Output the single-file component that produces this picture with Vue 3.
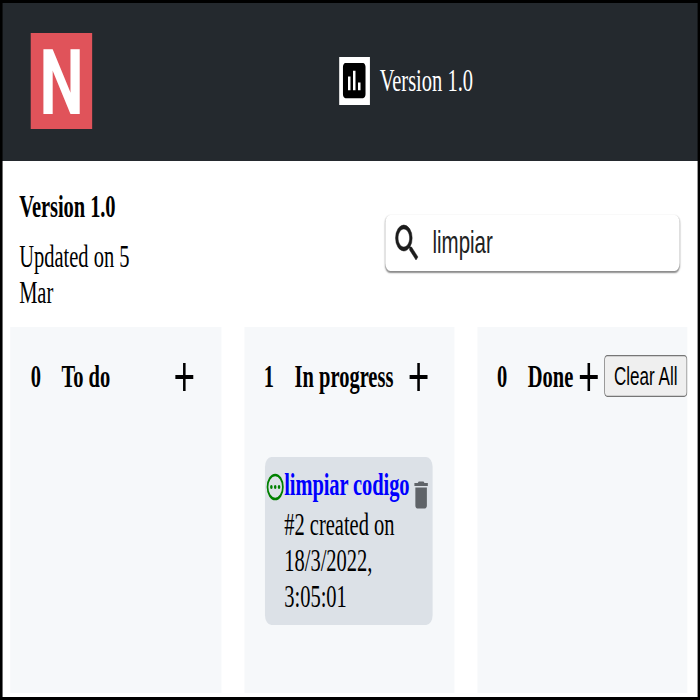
<script setup>
const columns = [
  {
    title: 'To do',
    cards: []
  },
  {
    title: 'In progress',
    cards: [{ id: 2, title: 'limpiar codigo', created: '18/3/2022, 3:05:01' }]
  },
  {
    title: 'Done',
    cards: [],
    clearable: true
  }
]
</script>

<template>
  <div class="viewport">
    <div class="page">
      <header class="header">
        <div class="logo"><span class="logo-letter">N</span></div>
        <div class="project">
          <svg class="project-icon" viewBox="0 0 24 24">
            <path d="M19 3H5c-1.100 0-2 .9-2 2v14c0 1.100.9 2 2 2h14c1.100 0 2-.9 2-2V5c0-1.100-.9-2-2-2zM9 17H7v-7h2v7zm4 0h-2V7h2v10zm4 0h-2v-4h2v4z" />
          </svg>
          <span>Version 1.0</span>
        </div>
      </header>

      <div class="content">
        <section class="toolbar">
          <div class="info">
            <strong class="info-title">Version 1.0</strong>
            <span>Updated on 5 Mar</span>
          </div>
          <div class="search">
            <svg class="search-icon" viewBox="0 0 24 24">
              <path d="M15.500 14h-.79l-.28-.27A6.471 6.471 0 0 0 16 9.500 6.500 6.500 0 1 0 9.500 16c1.610 0 3.090-.59 4.230-1.570l.27.28v.79l5 4.990L20.490 19l-4.990-5zm-6 0C7.010 14 5 11.990 5 9.500S7.010 5 9.500 5 14 7.010 14 9.500 11.990 14 9.500 14z" />
            </svg>
            <span class="search-text">limpiar</span>
          </div>
        </section>

        <main class="board">
          <section v-for="column in columns" :key="column.title" class="column">
            <div class="column-head">
              <span class="count">{{ column.cards.length }}</span>
              <span class="column-title">{{ column.title }}</span>
              <svg class="add" viewBox="0 0 24 24">
                <path d="M19 13h-6v6h-2v-6H5v-2h6V5h2v6h6v2z" />
              </svg>
              <button v-if="column.clearable" class="clear">Clear All</button>
            </div>
            <article v-for="card in column.cards" :key="card.id" class="card">
              <svg class="status" viewBox="0 0 24 24">
                <circle cx="12" cy="12" r="9" fill="none" stroke="green" stroke-width="2" />
                <circle cx="7.500" cy="12" r="1.500" fill="green" />
                <circle cx="12" cy="12" r="1.500" fill="green" />
                <circle cx="16.500" cy="12" r="1.500" fill="green" />
              </svg>
              <div class="card-body">
                <strong class="card-title">{{ card.title }}</strong>
                <span>#{{ card.id }} created on {{ card.created }}</span>
              </div>
              <svg class="trash" viewBox="0 0 24 24">
                <path d="M6 19c0 1.100.9 2 2 2h8c1.100 0 2-.9 2-2V7H6v12zM19 4h-3.500l-1-1h-5l-1 1H5v2h14V4z" />
              </svg>
            </article>
          </section>
        </main>
      </div>
    </div>
  </div>
</template>

<style>
body {
  margin: 0;
  overflow: hidden;
}
</style>

<style scoped>
.viewport {
  width: 700px;
  height: 700px;
  overflow: hidden;
  background: #000;
}
.page {
  box-sizing: border-box;
  width: 546.875px;
  height: 351px;
  padding: 2px 1.570px;
  display: flex;
  flex-direction: column;
  transform: translateY(-1px) scale(1.28, 2);
  transform-origin: 0 0;
  font-family: "Liberation Serif", serif;
  font-size: 16px;
  line-height: 18px;
  color: #000;
  background: #000;
}
.header {
  box-sizing: border-box;
  height: 79px;
  flex: none;
  display: flex;
  align-items: center;
  padding: 0 22.600px 1px;
  background: #24292e;
}
.logo {
  width: 48px;
  height: 48px;
  display: flex;
  align-items: center;
  justify-content: center;
  background: #e0535a;
  color: #fff;
}
.logo-letter {
  font: 700 45.700px/48px Roboto, sans-serif;
  transform: translateY(1.500px) scaleX(1.070);
}
.project {
  display: flex;
  align-items: center;
  gap: 8px;
  margin-left: 193px;
  color: #fff;
}
.project-icon {
  width: 23.500px;
  height: 23.500px;
  background: #fff;
  fill: #000;
}
.content {
  flex: 1;
  display: flex;
  flex-direction: column;
  background: #fff;
}
.toolbar {
  height: 83px;
  flex: none;
  display: flex;
  justify-content: space-between;
  align-items: flex-start;
  padding: 0 14.800px 0 13.400px;
  box-sizing: border-box;
}
.info {
  width: 100px;
  padding-top: 14px;
  display: flex;
  flex-direction: column;
  gap: 7px;
}
.info-title {
  letter-spacing: -0.050px;
}
.search {
  box-sizing: border-box;
  width: 229.500px;
  height: 28px;
  margin-top: 27px;
  padding-left: 4.500px;
  display: flex;
  align-items: center;
  gap: 8.400px;
  border-radius: 4px;
  box-shadow: 0 0.800px 1px rgba(0, 0, 0, 0.45), 0 0 1px rgba(0, 0, 0, 0.06);
}
.search-icon {
  width: 24px;
  height: 24px;
  fill: #1c1c1c;
  stroke: #1c1c1c;
  stroke-width: 0.300;
}
.search-text {
  font-family: "Liberation Sans", sans-serif;
  color: #222;
}
.board {
  flex: 1;
  display: grid;
  grid-template-columns: repeat(3, 164.200px);
  gap: 18px;
  padding: 0 0 2px 6.900px;
}
.column {
  background: #f6f8fa;
  padding-top: 13px;
}
.column-head {
  height: 24px;
  display: flex;
  align-items: center;
  padding-left: 15.500px;
  font-weight: 700;
  white-space: nowrap;
}
.count {
  width: 8px;
  margin-right: 16px;
}
.add {
  width: 24px;
  height: 24px;
  flex: none;
  margin-left: auto;
  margin-right: 16.200px;
}
.add:has(+ .clear) {
  margin-right: 0;
}
.clear {
  box-sizing: border-box;
  width: 65px;
  height: 21px;
  flex: none;
  margin: 0 0 1px;
  padding: 0 0 1px;
  font: 13.333px/19px "Liberation Sans", sans-serif;
  color: #000;
  background: #efefef;
  border: 0;
  box-shadow: inset 0 0 0 0.650px #767676;
  border-radius: 2.500px;
}
.card {
  box-sizing: border-box;
  width: 131.600px;
  height: 83.500px;
  margin: 28px 0 0 16px;
  display: flex;
  align-items: flex-start;
  border-radius: 5px;
  background: #dce1e7;
}
.status {
  width: 16px;
  height: 16px;
  flex: none;
  margin-top: 7px;
}
.card-body {
  width: 98.500px;
  flex: none;
  margin-left: -0.600px;
  padding-top: 5px;
  display: flex;
  flex-direction: column;
  gap: 2px;
}
.card-title {
  color: #0000ff;
  letter-spacing: -0.070px;
  white-space: nowrap;
}
.trash {
  width: 18px;
  height: 18px;
  flex: none;
  margin: 10px 0 0 -0.300px;
  fill: #5f6368;
}
</style>
